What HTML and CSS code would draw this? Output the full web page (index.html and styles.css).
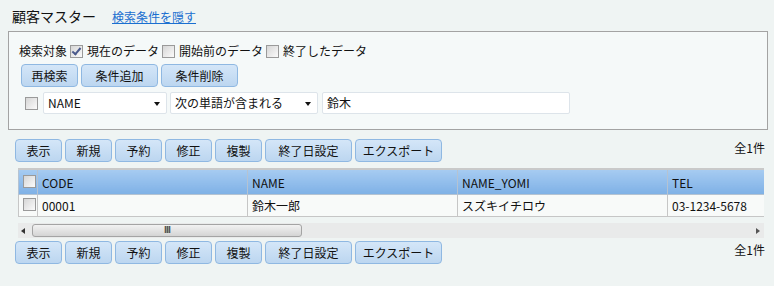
FILE: index.html
```html
<!DOCTYPE html>
<html lang="ja">
<head>
    <meta charset="UTF-8">
    <title>顧客マスター</title>
    <link rel="stylesheet" href="styles.css">
</head>
<body>

    <div class="header">
        <h1>顧客マスター</h1>
        <a href="#" class="toggle-link">検索条件を隠す</a>
    </div>

    <div class="search-box">
        <div class="target-row">
            <span>検索対象</span>
            <span class="check checked"></span><span>現在のデータ</span>
            <span class="check"></span><span>開始前のデータ</span>
            <span class="check"></span><span>終了したデータ</span>
        </div>
        <div class="btn-row">
            <button class="btn w57">再検索</button>
            <button class="btn w77">条件追加</button>
            <button class="btn w77">条件削除</button>
        </div>
        <div class="cond-row">
            <span class="check"></span>
            <div class="select sel-field">NAME<span class="arrow"></span></div>
            <div class="select sel-op">次の単語が含まれる<span class="arrow"></span></div>
            <div class="text-input">鈴木</div>
        </div>
    </div>

    <div class="toolbar">
        <div class="btn-row">
            <button class="btn w47">表示</button>
            <button class="btn w47">新規</button>
            <button class="btn w47">予約</button>
            <button class="btn w47">修正</button>
            <button class="btn w47">複製</button>
            <button class="btn w87">終了日設定</button>
            <button class="btn w87">エクスポート</button>
        </div>
        <div class="count">全1件</div>
    </div>

    <div class="grid">
        <table>
            <tr class="head">
                <th class="c-check"><span class="check"></span></th>
                <th class="c-col">CODE</th>
                <th class="c-col">NAME</th>
                <th class="c-col">NAME_YOMI</th>
                <th class="c-col">TEL</th>
            </tr>
            <tr class="data">
                <td class="c-check"><span class="check"></span></td>
                <td>00001</td>
                <td>鈴木一郎</td>
                <td>スズキイチロウ</td>
                <td>03-1234-5678</td>
            </tr>
        </table>
        <div class="hscroll">
            <span class="sarrow left"></span>
            <div class="thumb"><span class="grip">III</span></div>
            <span class="sarrow right"></span>
        </div>
    </div>

    <div class="toolbar bottom">
        <div class="btn-row">
            <button class="btn w47">表示</button>
            <button class="btn w47">新規</button>
            <button class="btn w47">予約</button>
            <button class="btn w47">修正</button>
            <button class="btn w47">複製</button>
            <button class="btn w87">終了日設定</button>
            <button class="btn w87">エクスポート</button>
        </div>
        <div class="count">全1件</div>
    </div>

</body>
</html>
```

FILE: styles.css
```css
body {
    font-family: "Noto Sans CJK JP", "Noto Sans", sans-serif;
    font-size: 12px;
    color: #111;
    background-color: #eff4f3;
    margin: 0;
    padding: 0;
}

.header {
    display: flex;
    align-items: baseline;
    padding: 3px 0 0 12px;
    height: 28px;
    box-sizing: border-box;
}

.header h1 {
    font-size: 14px;
    font-weight: normal;
    margin: 0;
    line-height: 18px;
    width: 100px;
}

.toggle-link {
    color: #1a6fd0;
    font-size: 12px;
    line-height: 16px;
    margin-top: 6px;
}

.search-box {
    margin-left: 8px;
    margin-top: 3px;
    width: 760px;
    height: 99px;
    box-sizing: border-box;
    border: 1px solid #a3a3a3;
    background-color: #f5f9f9;
    padding: 11px 0 0 10px;
}

.target-row {
    display: flex;
    align-items: center;
    gap: 2px;
    height: 16px;
    line-height: 16px;
}

.target-row .check {
    margin-left: 1px;
    margin-right: 2px;
}

.check {
    display: inline-block;
    width: 11px;
    height: 11px;
    border: 1px solid #9a9a9a;
    background: linear-gradient(135deg, #d6d6d6, #fbfbfb);
    position: relative;
    flex-shrink: 0;
}

.check.checked::after {
    content: "";
    position: absolute;
    left: 3px;
    top: 0px;
    width: 3px;
    height: 7px;
    border-right: 2px solid #4a5a8c;
    border-bottom: 2px solid #4a5a8c;
    transform: rotate(40deg);
}

.btn-row {
    display: flex;
    gap: 3px;
}

.search-box .btn-row {
    margin-top: 5px;
    margin-left: 2px;
}

.btn {
    font-family: inherit;
    font-size: 12px;
    color: #111;
    height: 23px;
    line-height: 19px;
    padding: 0;
    border: 1px solid #8fb8e2;
    border-radius: 4px;
    background: linear-gradient(#d4e6f8, #bcd6f0);
    cursor: pointer;
}

.w47 { width: 47px; }
.w57 { width: 57px; }
.w77 { width: 77px; }
.w87 { width: 87px; }

.cond-row {
    display: flex;
    align-items: center;
    gap: 3px;
    margin-top: 5px;
    height: 22px;
}

.cond-row .check {
    margin-left: 6px;
    margin-right: 2px;
}

.select, .text-input {
    position: relative;
    height: 22px;
    line-height: 20px;
    box-sizing: border-box;
    background-color: #fff;
    border: 1px solid #dde4ea;
    border-radius: 2px;
    padding-left: 4px;
}

.sel-field { width: 124px; }
.sel-op { width: 148px; }
.text-input { width: 248px; margin-left: 1px; }

.arrow {
    position: absolute;
    right: 6px;
    top: 9px;
    border-left: 3px solid transparent;
    border-right: 3px solid transparent;
    border-top: 4px solid #111;
}

.toolbar {
    display: flex;
    justify-content: space-between;
    margin: 9px 9px 0 15px;
}

.count {
    line-height: 16px;
    margin-top: 1px;
}

.toolbar.bottom {
    margin-top: 3px;
}

.grid {
    margin: 6px 0 0 18px;
    width: 746px;
    overflow: hidden;
}

table {
    border-collapse: collapse;
    width: 760px;
    table-layout: fixed;
}

th, td {
    text-align: left;
    font-weight: normal;
    padding: 0 0 0 4px;
    white-space: nowrap;
}

.head th {
    height: 24px;
    background: linear-gradient(#a6cbf1, #7fb1e6);
    border: 1px solid #b5c3d2;
    border-top: 2px solid #c9c9c9;
}

.data td {
    height: 21px;
    background-color: #f8faf9;
    border: 1px solid #c6c6c6;
    border-top: none;
}

.c-check {
    width: 15px;
}

.c-col {
    width: 205px;
}

.head .c-check {
    width: 14px;
}

.hscroll {
    display: flex;
    align-items: center;
    margin-top: 6px;
    height: 15px;
    background-color: #e9eaea;
    position: relative;
}

.sarrow {
    width: 0;
    height: 0;
    border-top: 3px solid transparent;
    border-bottom: 3px solid transparent;
}

.sarrow.left {
    margin-left: 3px;
    border-right: 4px solid #333;
}

.sarrow.right {
    margin-left: auto;
    margin-right: 4px;
    border-left: 4px solid #555;
}

.thumb {
    margin-left: 7px;
    width: 270px;
    height: 13px;
    box-sizing: border-box;
    border: 1px solid #a4a4a4;
    border-radius: 3px;
    background: linear-gradient(#f2f2f2, #d4d4d4);
    display: flex;
    justify-content: center;
    align-items: center;
}

.grip {
    font-family: "DejaVu Sans", sans-serif;
    font-size: 8px;
    font-weight: bold;
    color: #555;
    letter-spacing: -1px;
    line-height: 9px;
}
```
